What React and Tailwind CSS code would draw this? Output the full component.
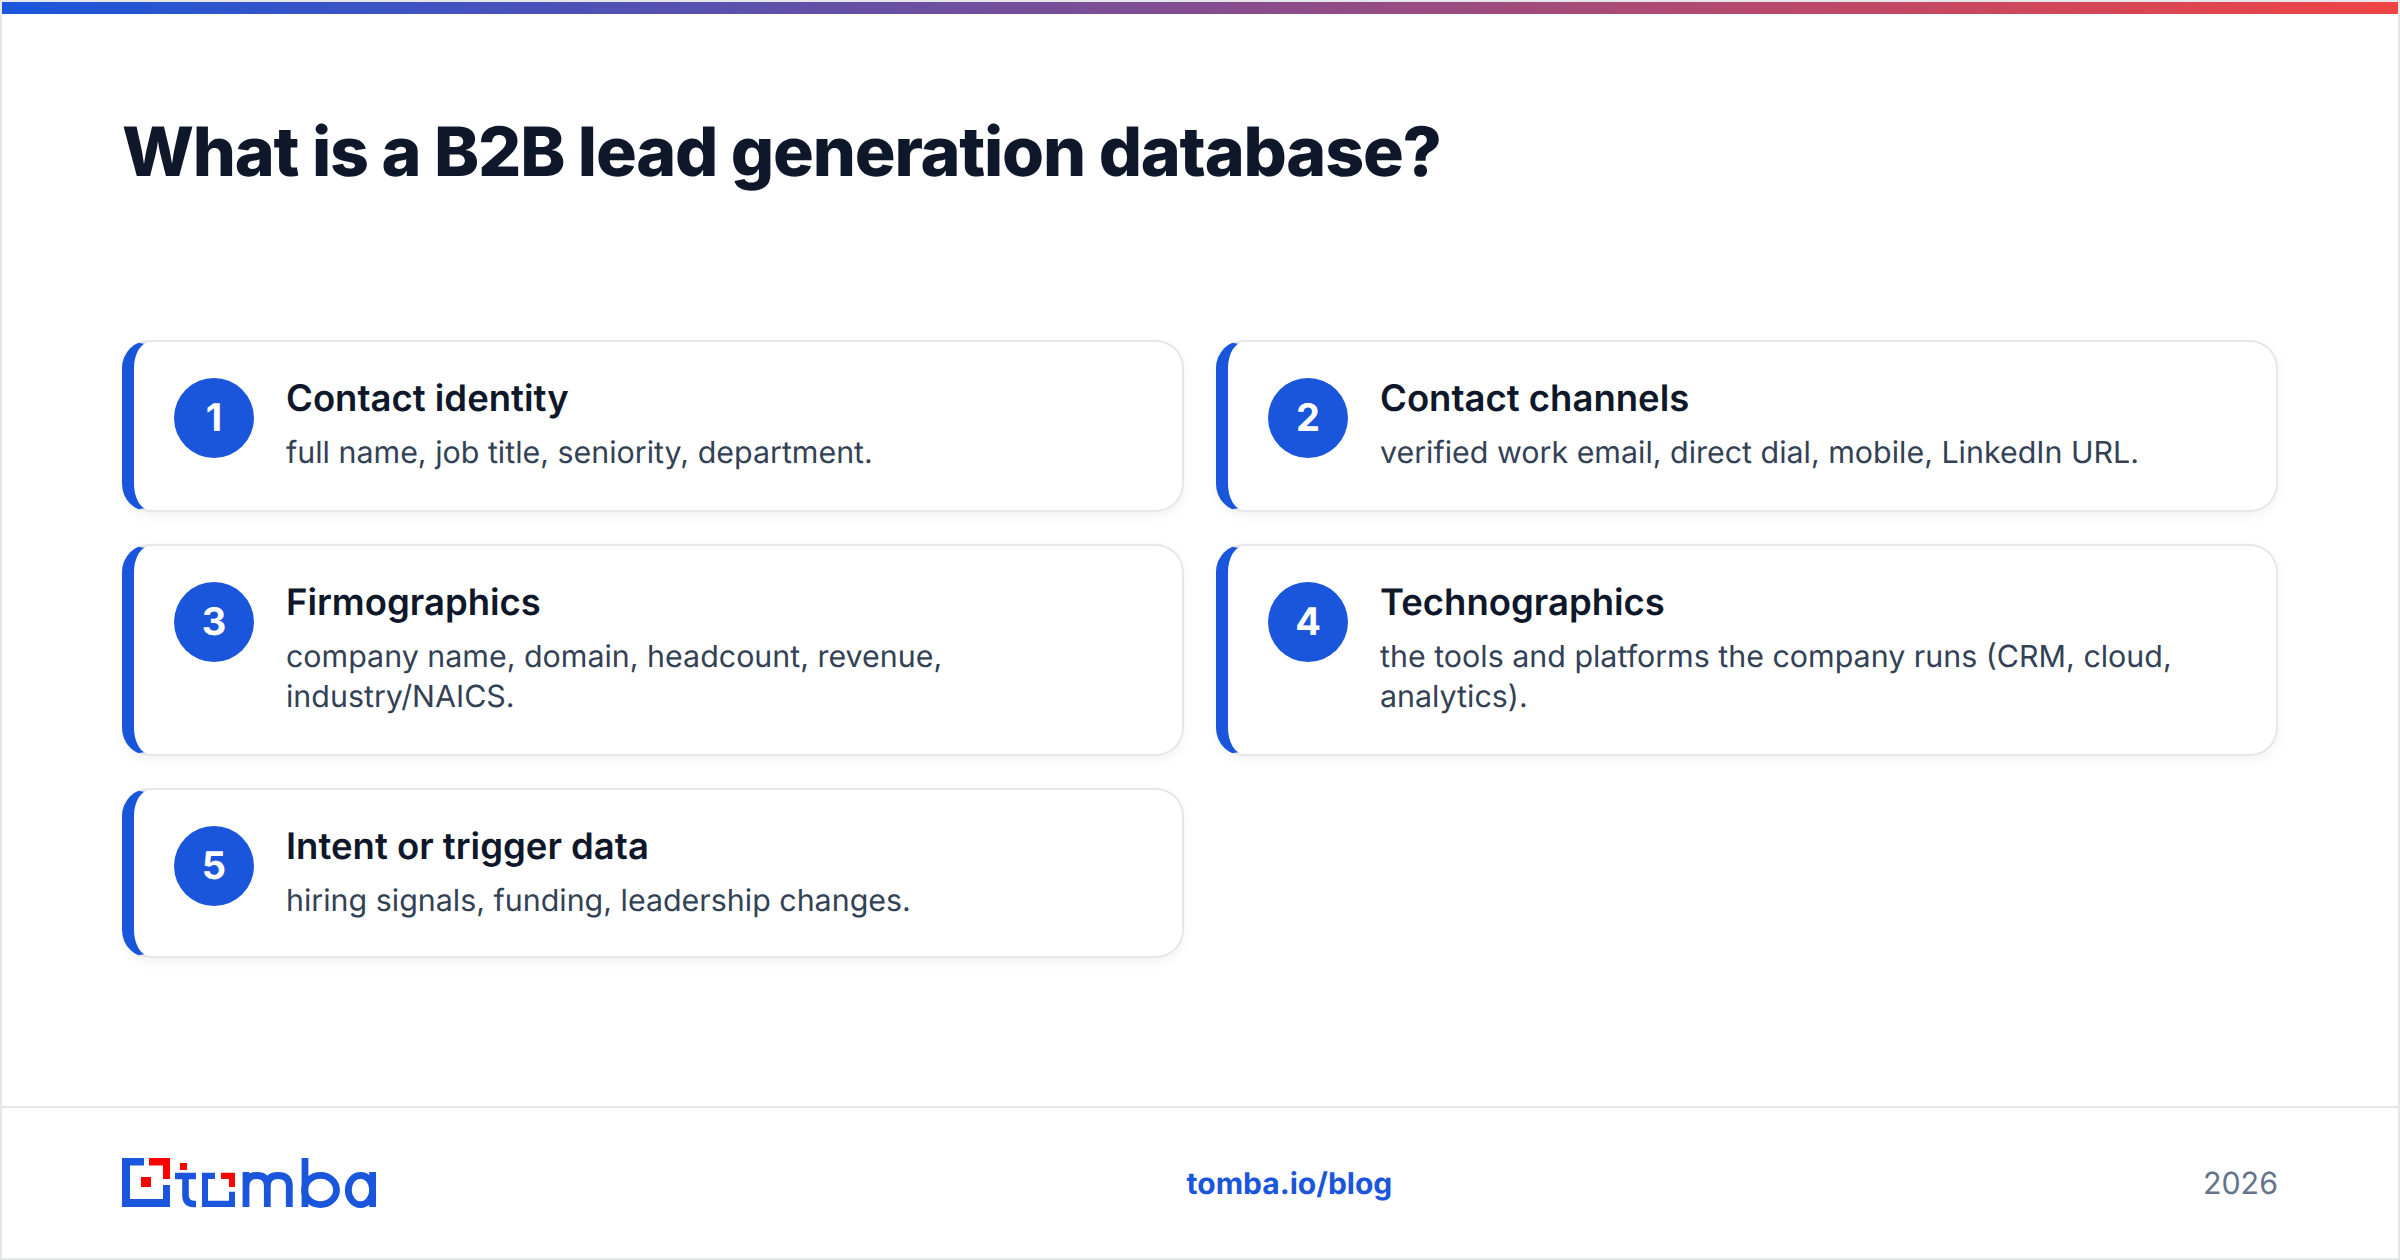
import React from "react";

const items = [
  { n: 1, title: "Contact identity", text: "full name, job title, seniority, department." },
  { n: 2, title: "Contact channels", text: "verified work email, direct dial, mobile, LinkedIn URL." },
  { n: 3, title: "Firmographics", text: "company name, domain, headcount, revenue, industry/NAICS." },
  { n: 4, title: "Technographics", text: "the tools and platforms the company runs (CRM, cloud, analytics)." },
  { n: 5, title: "Intent or trigger data", text: "hiring signals, funding, leadership changes." },
];

const Logo = () => (
  <svg width="254" height="50" viewBox="0 0 254 50" fill="none">
    <path d="M0 0H22V7.5H8V41H41V27H48V49H0Z" fill="#1a56db" />
    <path d="M27 0H48V21H41V7.5H27Z" fill="#ff0000" />
    <rect x="19" y="19" width="10" height="10" fill="#ff0000" />
    <rect x="58" y="5" width="7" height="7" fill="#ff0000" />
    <path d="M53 18H74M63.5 14.7V37Q63.5 46 72 46H74" stroke="#1a56db" strokeWidth="6.6" />
    <path d="M80 14.7H93V21H86V42.7H107V33.7H113V49H80Z" fill="#1a56db" />
    <path d="M99 14.7H113V29H107V21H99Z" fill="#ff0000" />
    <path d="M124 14V49M124 28Q124 17.5 135 17.5Q145.3 17.5 145.3 28V49M145.3 28Q145.3 17.5 156 17.5Q167.3 17.5 167.3 28V49" stroke="#1a56db" strokeWidth="6.8" />
    <path d="M183 0V49" stroke="#1a56db" strokeWidth="6.8" />
    <ellipse cx="198.5" cy="32" rx="16" ry="14.6" stroke="#1a56db" strokeWidth="6.8" />
    <ellipse cx="238.5" cy="32" rx="12.2" ry="14.6" stroke="#1a56db" strokeWidth="6.8" />
    <path d="M250.6 14V49" stroke="#1a56db" strokeWidth="6.8" />
  </svg>
);

const Card = ({ n, title, text }) => (
  <div className="flex gap-8 rounded-[28px] border-2 border-l-12 border-[#e5e7eb] border-l-[#1a56db] bg-white pt-[36px] pb-[35px] px-[40px] shadow-[0_4px_12px_rgba(15,23,42,0.05)]">
    <div className="flex h-20 w-20 shrink-0 items-center justify-center rounded-full bg-[#1a56db] text-[38px] font-bold text-white">
      {n}
    </div>
    <div className="min-w-0">
      <h3 className="mt-[-2px] text-[36.5px] leading-[44px] font-semibold text-[#0f172a]">{title}</h3>
      <p className="mt-[13px] text-[30.4px] leading-[40px] text-[#334155]">{text}</p>
    </div>
  </div>
);

export default function App() {
  return (
    <div className="flex h-[1260px] w-[2400px] flex-col border-2 border-[#e5e7eb] bg-white font-['Inter',sans-serif] [text-rendering:geometricPrecision]">
      <div className="h-3 shrink-0 bg-linear-to-r/srgb from-[#1a56db] to-[#ef4444]" />
      <div className="flex-1 px-[120px]">
        <h1 className="mt-[96px] text-[68px] leading-[84px] font-extrabold tracking-[-1.2px] text-[#0f172a]">
          What is a B2B lead generation database?
        </h1>
        <div className="mt-[146px] grid grid-cols-2 grid-rows-[172px_212px_170px] gap-x-8 gap-y-8">
          {items.map((item) => (
            <Card key={item.n} {...item} />
          ))}
        </div>
      </div>
      <div className="flex h-[152px] shrink-0 items-center justify-between border-t-2 border-[#e5e7eb] px-[120px]">
        <Logo />
        <a className="mt-[2px] text-[30px] font-bold text-[#1a56db]">tomba.io/blog</a>
        <span className="mt-[4px] text-[30.4px] text-[#64748b]">2026</span>
      </div>
    </div>
  );
}
